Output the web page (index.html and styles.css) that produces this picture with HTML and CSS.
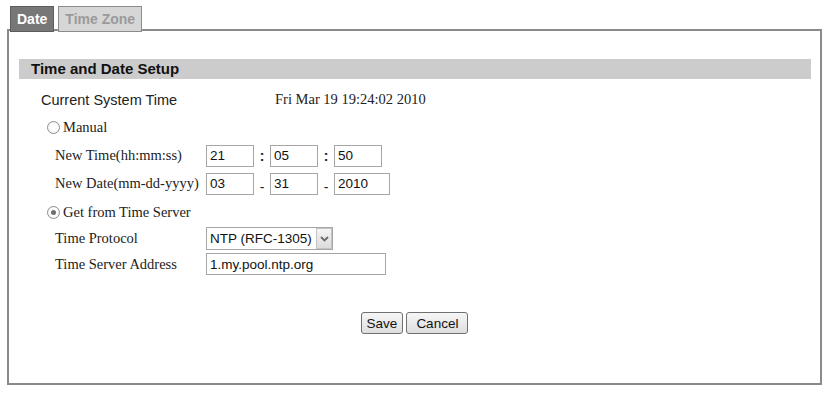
FILE: index.html
```html
<!DOCTYPE html>
<html lang="en">
<head>
    <meta charset="UTF-8">
    <title>Time and Date Setup</title>
    <link rel="stylesheet" href="styles.css">
</head>
<body>
    <div class="tabs">
        <span class="tab tab-active">Date</span>
        <span class="tab">Time Zone</span>
    </div>
    <div class="panel">
        <div class="section-title">Time and Date Setup</div>
        <div class="form">
            <div class="row row-info">
                <span class="info-label">Current System Time</span>
                <span class="info-value">Fri Mar 19 19:24:02 2010</span>
            </div>
            <label class="row row-radio"><input type="radio" name="mode" class="radio">Manual</label>
            <div class="row row-sub">
                <span class="label">New Time(hh:mm:ss)</span>
                <input type="text" class="field" value="21">
                <span class="sep">:</span>
                <input type="text" class="field" value="05">
                <span class="sep">:</span>
                <input type="text" class="field" value="50">
            </div>
            <div class="row row-sub row-date">
                <span class="label">New Date(mm-dd-yyyy)</span>
                <input type="text" class="field" value="03">
                <span class="sep sep-date">-</span>
                <input type="text" class="field" value="31">
                <span class="sep sep-date">-</span>
                <input type="text" class="field field-year" value="2010">
            </div>
            <label class="row row-radio row-server"><input type="radio" name="mode" class="radio" checked>Get from Time Server</label>
            <div class="row row-sub row-protocol">
                <span class="label">Time Protocol</span>
                <span class="select-wrap">
                    <select class="select">
                        <option>NTP (RFC-1305)</option>
                    </select>
                    <span class="select-arrow">
                        <svg width="9" height="6" viewBox="0 0 9 6"><path d="M1 1 L4.5 4.5 L8 1" fill="none" stroke="#6b6b6b" stroke-width="1.8"/></svg>
                    </span>
                </span>
            </div>
            <div class="row row-sub row-address">
                <span class="label">Time Server Address</span>
                <input type="text" class="field field-wide" value="1.my.pool.ntp.org">
            </div>
        </div>
        <div class="actions">
            <button class="btn">Save</button>
            <button class="btn btn-cancel">Cancel</button>
        </div>
    </div>
</body>
</html>
```

FILE: styles.css
```css
body {
    margin: 0;
    padding: 0;
    background: white;
    font-family: "Liberation Serif", "Times New Roman", serif;
    font-size: 14.5px;
    color: #222;
}
.tabs {
    display: flex;
    gap: 4px;
    padding: 6px 0 0 10px;
    margin-bottom: -3px;
    position: relative;
    z-index: 1;
}
.tab {
    box-sizing: border-box;
    height: 26px;
    line-height: 24px;
    padding: 0 6px;
    border: 1px solid #8c8c8c;
    background: #d6d6d6;
    color: #9a9a9a;
    font-family: "Liberation Sans", Arial, sans-serif;
    font-weight: bold;
    font-size: 14px;
}
.tab-active {
    background: #777;
    border-color: #5c5c5c;
    color: white;
}
.panel {
    box-sizing: border-box;
    margin-left: 7px;
    width: 815px;
    height: 356px;
    border: 2px solid #8a8a8a;
}
.section-title {
    margin: 28px 9px 0 10px;
    height: 20px;
    line-height: 20px;
    padding-left: 12px;
    background: #cccccc;
    font-family: "Liberation Sans", Arial, sans-serif;
    font-weight: bold;
    font-size: 15px;
    color: #111;
}
.form {
    margin-top: 7px;
}
.row {
    display: flex;
    align-items: center;
    height: 27px;
}
.row-info {
    padding-left: 32px;
}
.info-label {
    width: 234px;
    font-family: "Liberation Sans", Arial, sans-serif;
    font-size: 14.5px;
}
.row-radio {
    height: 29px;
    padding-left: 38px;
}
.row-date {
    height: 29px;
}
.row-server {
    height: 28px;
}
.row-protocol {
    height: 25px;
}
.row-address {
    height: 26px;
}
.radio {
    appearance: none;
    box-sizing: border-box;
    width: 13px;
    height: 13px;
    margin: 0 3px 0 0;
    border: 1px solid #8e8e8e;
    border-radius: 50%;
    background: radial-gradient(circle, #fff 40%, #ececec 100%);
    display: flex;
    align-items: center;
    justify-content: center;
}
.radio:checked::after {
    content: "";
    width: 5px;
    height: 5px;
    border-radius: 50%;
    background: #6e6e6e;
}
.row-sub {
    padding-left: 46px;
}
.label {
    width: 151px;
}
.field {
    box-sizing: border-box;
    width: 48px;
    height: 22px;
    margin: 0;
    padding: 0 3px;
    border: 1px solid #a6a6a6;
    font-family: "Liberation Sans", Arial, sans-serif;
    font-size: 13.5px;
    color: #111;
}
.field-year {
    width: 56px;
}
.field-wide {
    width: 180px;
}
.sep {
    width: 16px;
    text-align: center;
    font-family: "Liberation Sans", Arial, sans-serif;
    font-weight: bold;
    font-size: 14px;
}
.sep-date {
    align-self: flex-end;
    line-height: 22px;
    font-weight: normal;
}
.select-wrap {
    position: relative;
    display: inline-flex;
}
.select {
    appearance: none;
    box-sizing: border-box;
    width: 127px;
    height: 23px;
    margin: 0;
    padding: 0 3px;
    border: 1px solid #a6a6a6;
    background: white;
    font-family: "Liberation Sans", Arial, sans-serif;
    font-size: 13.5px;
    color: #111;
}
.select-arrow {
    position: absolute;
    right: 1px;
    top: 1px;
    bottom: 1px;
    width: 16px;
    box-sizing: border-box;
    border: 1px solid #c4c4c4;
    background: linear-gradient(#f4f4f4, #dcdcdc);
    display: flex;
    align-items: center;
    justify-content: center;
    pointer-events: none;
}
.actions {
    display: flex;
    justify-content: center;
    gap: 3px;
    margin-top: 35px;
}
.btn {
    box-sizing: border-box;
    height: 22px;
    padding: 0 5px;
    border: 1px solid #707070;
    border-radius: 3px;
    background: linear-gradient(#f6f6f6, #dedede);
    font-family: "Liberation Sans", Arial, sans-serif;
    font-size: 13.5px;
    color: #111;
    cursor: pointer;
}
.btn-cancel {
    padding: 0 9px;
}
.btn:hover {
    background: linear-gradient(#eaf6fd, #d9f0fc);
}
```
